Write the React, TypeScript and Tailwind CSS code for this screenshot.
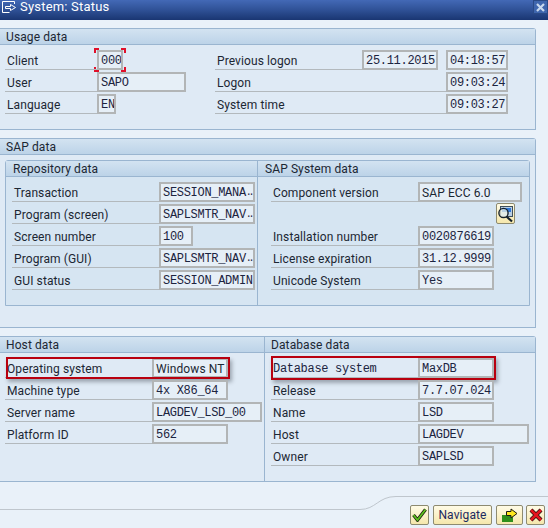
import React from "react";

const sans = "font-['Roboto','Noto_Sans',sans-serif] text-[12px] tracking-[0.1px] text-[#1c2733]";
const mono = "font-['Liberation_Mono',monospace] text-[12px] tracking-[-0.3px] text-[#1c2440]";

function Box({ w, children, sansText }: { w: string; children?: React.ReactNode; sansText?: boolean }) {
  return (
    <div
      className={`${w} flex h-5 shrink-0 items-center overflow-hidden whitespace-nowrap border-2 border-[#b2b5b6] bg-[#e6eff7] pl-[2px] pt-[1px] leading-none ${sansText ? sans : mono}`}
    >
      {children}
    </div>
  );
}

function Label({ w, children, monoText }: { w: string; children?: React.ReactNode; monoText?: boolean }) {
  return (
    <div
      className={`${w} flex h-5 shrink-0 items-center whitespace-nowrap border-b border-[#b3b9bd] pl-[2px] pt-[2px] leading-none ${monoText ? mono : sans}`}
    >
      {children}
    </div>
  );
}

function Row({ children }: { children: React.ReactNode }) {
  return <div className="relative flex h-[22px] items-end">{children}</div>;
}

function Header({ children, inner }: { children: React.ReactNode; inner?: boolean }) {
  return (
    <div
      className={`flex h-4 items-center border-b border-[#9ab5d0] bg-gradient-to-b from-[#d3e3f1] to-[#bcd3e8] ${inner ? "pl-[7px]" : "pl-[6px]"} ${sans} leading-none`}
    >
      {children}
    </div>
  );
}

function Dots() {
  return <span className="text-[10px] tracking-[-3.3px]">...</span>;
}

function Corners() {
  return (
    <div className="absolute left-[89px] top-0 h-[24px] w-[32px]">
      <span className="absolute left-0 top-0 h-[5px] w-[5px] border-l-2 border-t-2 border-[#e0102a]" />
      <span className="absolute right-0 top-0 h-[5px] w-[5px] border-r-2 border-t-2 border-[#e0102a]" />
      <span className="absolute bottom-0 left-0 h-[5px] w-[5px] border-b-2 border-l-2 border-[#e0102a]" />
      <span className="absolute bottom-0 right-0 h-[5px] w-[5px] border-b-2 border-r-2 border-[#e0102a]" />
    </div>
  );
}

function TitleIcon() {
  return (
    <svg width="16" height="14" viewBox="0 0 16 14" fill="none" stroke="#fff" strokeWidth="1">
      <path d="M1.5 1.5H13.5V4M1.5 1.5V12.5H8.5M4.5 6.5H9.5V4.5L14.5 7.5L9.5 10.5V8.5H4.5Z" />
    </svg>
  );
}

function LookupIcon() {
  return (
    <svg width="17" height="18" viewBox="0 0 17 18">
      <rect x="3.5" y="1.5" width="12" height="10" fill="#b9cfe4" stroke="#40505c" />
      <rect x="5" y="3" width="9" height="4" fill="#2f78d8" />
      <circle cx="6.5" cy="8" r="4.6" fill="#f4f6e8" fillOpacity="0.7" stroke="#14202c" strokeWidth="1.4" />
      <path d="M9.5 11.5L15 16.5" stroke="#14202c" strokeWidth="2.2" />
    </svg>
  );
}

const btn =
  "flex h-5 items-center justify-center rounded-[2px] border border-[#8d8a70] bg-gradient-to-b from-[#fffbe6] to-[#f5e7ac]";

export default function App() {
  return (
    <div className="relative flex h-[528px] w-[548px] flex-col overflow-hidden bg-[#e9f1f9]">
      {/* Title bar */}
      <div className="flex h-5 shrink-0 items-start justify-between bg-gradient-to-b from-[#4369b6] via-[#2f5196] to-[#1a3672]">
        <div className="flex items-center pl-[1px]">
          <TitleIcon />
          <span className="ml-[3px] font-['Roboto',sans-serif] text-[13px] leading-[14px] tracking-[0.2px] text-white">System: Status</span>
        </div>
        <div className="flex h-[14px] w-[15px] items-center justify-center border border-[#2a4a86] bg-[#3f66ae]">
          <svg width="9" height="9" viewBox="0 0 9 9" stroke="#c9d9ee" strokeWidth="2.2">
            <path d="M1 1L8 8M8 1L1 8" />
          </svg>
        </div>
      </div>

      {/* Usage data */}
      <div className="mt-2 h-[102px] w-[536px] shrink-0 rounded-tr-[3px] border-y border-r border-[#9ab5d0] bg-[#dfeaf5]">
        <Header>Usage data</Header>
        <div className="flex pl-[5px] pt-[3px]">
          <div className="relative w-[210px]">
            <Corners />
            <Row>
              <Label w="w-[92px]">Client</Label>
              <Box w="w-[26px]">000</Box>
            </Row>
            <Row>
              <Label w="w-[92px]">User</Label>
              <Box w="w-[89px]">SAPO</Box>
            </Row>
            <Row>
              <Label w="w-[92px]">Language</Label>
              <Box w="w-[19px]">EN</Box>
            </Row>
          </div>
          <div>
            <Row>
              <Label w="w-[147px]">Previous logon</Label>
              <Box w="w-[76px]">25.11.2015</Box>
              <div className="w-2 shrink-0" />
              <Box w="w-[62px]">04:18:57</Box>
            </Row>
            <Row>
              <Label w="w-[231px]">Logon</Label>
              <Box w="w-[62px]">09:03:24</Box>
            </Row>
            <Row>
              <Label w="w-[231px]">System time</Label>
              <Box w="w-[62px]">09:03:27</Box>
            </Row>
          </div>
        </div>
      </div>

      {/* SAP data */}
      <div className="mt-2 h-[190px] w-[536px] shrink-0 rounded-tr-[3px] border-y border-r border-[#9ab5d0] bg-[#dfeaf5]">
        <Header>SAP data</Header>
        <div className="pl-[5px] pt-[5px]">
          <div className="flex h-[146px] w-[525px] rounded-t-[3px] border border-[#9ab5d0] bg-[#d6e5f2]">
            <div className="w-[252px] border-r border-[#9ab5d0]">
              <Header inner>Repository data</Header>
              <div className="pl-[6px] pt-[3px]">
                <Row>
                  <Label w="w-[147px]">Transaction</Label>
                  <Box w="w-[96px]">SESSION_MANA<Dots /></Box>
                </Row>
                <Row>
                  <Label w="w-[147px]">Program (screen)</Label>
                  <Box w="w-[96px]">SAPLSMTR_NAV<Dots /></Box>
                </Row>
                <Row>
                  <Label w="w-[147px]">Screen number</Label>
                  <Box w="w-[34px]">100</Box>
                </Row>
                <Row>
                  <Label w="w-[147px]">Program (GUI)</Label>
                  <Box w="w-[96px]">SAPLSMTR_NAV<Dots /></Box>
                </Row>
                <Row>
                  <Label w="w-[147px]">GUI status</Label>
                  <Box w="w-[96px]">SESSION_ADMIN</Box>
                </Row>
              </div>
            </div>
            <div className="flex-1">
              <Header inner>SAP System data</Header>
              <div className="pl-[13px] pt-[3px]">
                <Row>
                  <Label w="w-[147px]">Component version</Label>
                  <Box w="w-[104px]" sansText>SAP ECC 6.0</Box>
                </Row>
                <Row>
                  <div className="ml-[225px] flex h-[21px] w-[19px] items-center justify-center rounded-[2px] border border-[#8d8a70] bg-gradient-to-b from-[#fffbe6] to-[#f5e7ac]">
                    <LookupIcon />
                  </div>
                </Row>
                <Row>
                  <Label w="w-[147px]">Installation number</Label>
                  <Box w="w-[76px]">0020876619</Box>
                </Row>
                <Row>
                  <Label w="w-[147px]">License expiration</Label>
                  <Box w="w-[76px]">31.12.9999</Box>
                </Row>
                <Row>
                  <Label w="w-[147px]">Unicode System</Label>
                  <Box w="w-[76px]">Yes</Box>
                </Row>
              </div>
            </div>
          </div>
        </div>
      </div>

      {/* Host & Database */}
      <div className="mt-2 flex h-[146px] w-[536px] shrink-0 rounded-tr-[3px] border-y border-r border-[#9ab5d0] bg-[#dfeaf5]">
        <div className="w-[265px] border-r border-[#9ab5d0]">
          <Header>Host data</Header>
          <div className="pl-[5px] pt-[3px]">
            <Row>
              <Label w="w-[147px]">Operating system</Label>
              <Box w="w-[76px]" sansText>Windows NT</Box>
              <div className="absolute left-[1px] top-[1px] h-[22px] w-[224px] border-[2px] border-[#b8000f] shadow-[2px_3px_4px_rgba(70,80,90,0.45)]" />
            </Row>
            <Row>
              <Label w="w-[147px]">Machine type</Label>
              <Box w="w-[76px]">4x X86_64</Box>
            </Row>
            <Row>
              <Label w="w-[147px]">Server name</Label>
              <Box w="w-[110px]">LAGDEV_LSD_00</Box>
            </Row>
            <Row>
              <Label w="w-[147px]">Platform ID</Label>
              <Box w="w-[76px]">562</Box>
            </Row>
          </div>
        </div>
        <div className="flex-1">
          <Header>Database data</Header>
          <div className="pl-[6px] pt-[3px]">
            <Row>
              <Label w="w-[147px]" monoText>Database system</Label>
              <Box w="w-[76px]">MaxDB</Box>
              <div className="absolute left-0 top-0 h-[24px] w-[225px] border-[2px] border-[#b8000f] shadow-[2px_3px_4px_rgba(70,80,90,0.45)]" />
            </Row>
            <Row>
              <Label w="w-[147px]">Release</Label>
              <Box w="w-[76px]">7.7.07.024</Box>
            </Row>
            <Row>
              <Label w="w-[147px]">Name</Label>
              <Box w="w-[76px]">LSD</Box>
            </Row>
            <Row>
              <Label w="w-[147px]">Host</Label>
              <Box w="w-[111px]">LAGDEV</Box>
            </Row>
            <Row>
              <Label w="w-[147px]">Owner</Label>
              <Box w="w-[76px]">SAPLSD</Box>
            </Row>
          </div>
        </div>
      </div>

      {/* Footer curve */}
      <svg className="absolute bottom-0 left-0" width="548" height="34" viewBox="0 0 548 34" fill="none">
        <path d="M0 15.5H360C376 15.5 378 2.5 396 2.5H548" stroke="#bfc6cd" strokeWidth="1" />
      </svg>

      {/* Footer buttons */}
      <div className="relative mt-auto flex justify-end pb-[3px] pr-[3px]">
        <div className={`${btn} w-[19px]`}>
          <svg width="15" height="14" viewBox="0 0 15 14" fill="none">
            <path d="M1.5 7L5.5 12L13.5 1.5" stroke="#1d1d10" strokeWidth="3.4" />
            <path d="M1.5 7L5.5 12L13.5 1.5" stroke="#5cc21e" strokeWidth="1.8" />
          </svg>
        </div>
        <div className={`${btn} ml-1 w-[59px] ${sans}`}>
          <span className="text-[#1c2a60]">Navigate</span>
        </div>
        <div className={`${btn} ml-1 w-[27px]`}>
          <svg width="18" height="15" viewBox="0 0 18 15">
            <rect x="1" y="7" width="11" height="7" fill="#2f8f1c" />
            <path d="M5.5 3.5H10V1L16 5.5L10 10V7.5H5.5Z" fill="#ffe81c" stroke="#1a1a10" strokeWidth="1" />
          </svg>
        </div>
        <div className={`${btn} ml-[3px] w-[19px]`}>
          <svg width="14" height="14" viewBox="0 0 14 14" fill="none">
            <path d="M2 2L12 12M12 2L2 12" stroke="#2a1010" strokeWidth="4.2" />
            <path d="M2 2L12 12M12 2L2 12" stroke="#e5141c" strokeWidth="2.6" />
          </svg>
        </div>
      </div>
    </div>
  );
}
